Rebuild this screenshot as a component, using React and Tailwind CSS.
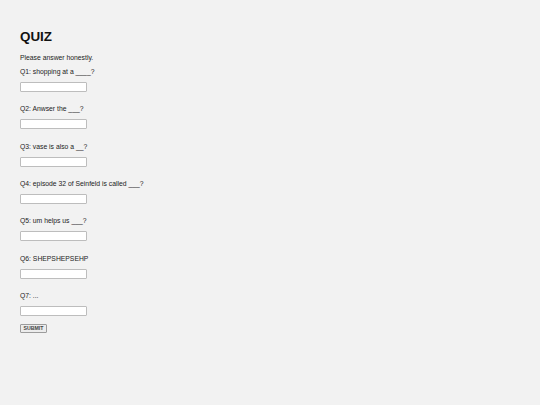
export default function App() {
  const qs = [
    "Q1: shopping at a ____?",
    "Q2: Anwser the ___?",
    "Q3: vase is also a __?",
    "Q4: episode 32 of Seinfeld is called ___?",
    "Q5: um helps us ___?",
    "Q6: SHEPSHEPSEHP",
    "Q7: ...",
  ];
  return (
    <div
      className="w-[540px] h-[405px] bg-[#f2f2f2] text-[#111] pl-[20px] pt-[29px] flex flex-col items-start"
      style={{ fontFamily: '"Liberation Sans", Arial, sans-serif' }}
    >
      <h1 className="text-[13.4px] leading-[16px] font-bold h-[16px]">QUIZ</h1>
      <p className="mt-[9px] text-[6.8px] leading-[8px] h-[8px] text-[#222]">Please answer honestly.</p>
      {qs.map((q, i) => (
        <div key={i} className={`flex flex-col items-start ${i === 0 ? "mt-[6px]" : "mt-[13.33px]"}`}>
          <p className="text-[6.8px] leading-[8px] h-[8px] text-[#222] whitespace-pre">{q}</p>
          <div className="mt-[6px] w-[67px] h-[10px] bg-white border border-[#bdbdbd] rounded-[1px]" />
        </div>
      ))}
      <div className="mt-[8px] w-[27px] h-[9px] bg-[#ececec] border border-[#9c9c9c] rounded-[1px] flex items-center justify-center text-[5.2px] font-bold leading-none text-[#444]">
        SUBMIT
      </div>
    </div>
  );
}
